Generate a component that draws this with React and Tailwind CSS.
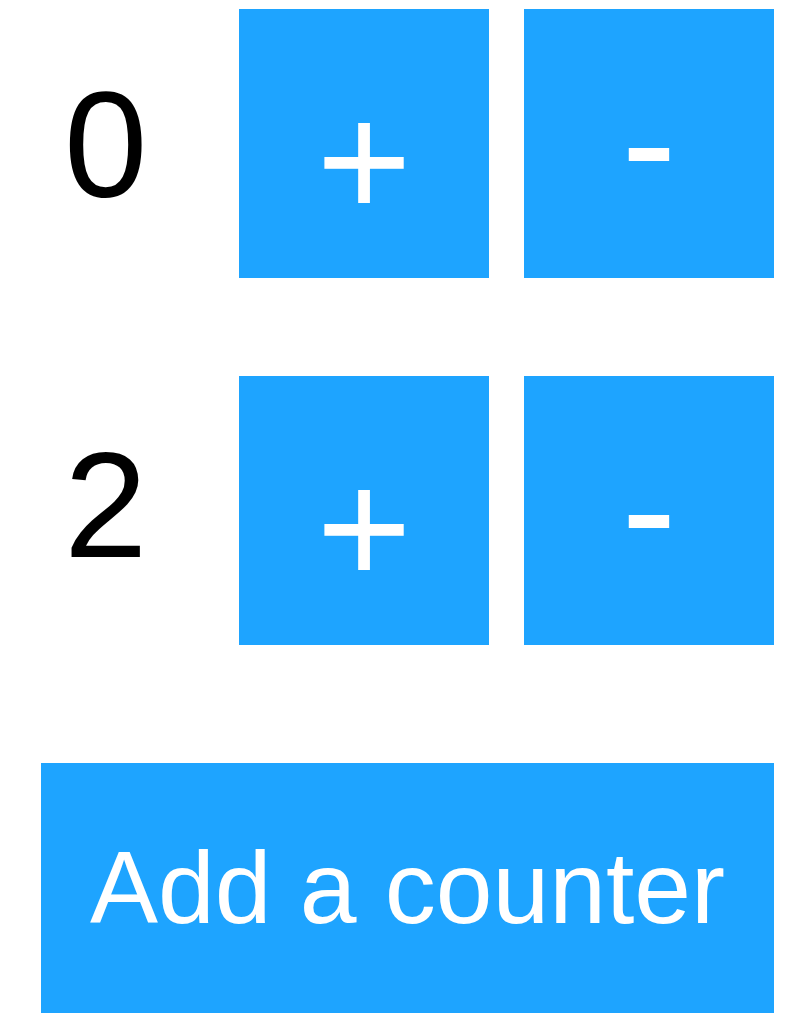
import React from "react";

function CounterRow({ value, numberPad, rowClass }) {
  return (
    <div className={"flex h-[269px] " + rowClass}>
      <div className={"flex-1 pl-[64px] " + numberPad}>
        <span className="block text-[150px] leading-none text-black">{value}</span>
      </div>
      <div className="flex gap-[35px]">
        <button className="w-[250px] h-[269px] bg-[#1ea4ff] flex justify-center items-start pt-[70px] text-white text-[163px] leading-none">
          <span className="block leading-none">+</span>
        </button>
        <button className="w-[250px] h-[269px] bg-[#1ea4ff] flex justify-center items-start pt-[50px] text-white text-[165px] leading-none">
          <span className="block leading-none">-</span>
        </button>
      </div>
    </div>
  );
}

export default function App() {
  return (
    <div className="w-[804px] h-[1026px] bg-white pt-[9px] pr-[30px] font-['Liberation_Sans',Arial,sans-serif] overflow-hidden">
      <CounterRow value="0" numberPad="pt-[61px]" rowClass="" />
      <CounterRow value="2" numberPad="pt-[54px]" rowClass="mt-[98px]" />
      <div className="mt-[118px] pl-[41px]">
        <button className="w-[733px] h-[250px] bg-[#1ea4ff] flex items-center justify-center text-white text-[102px] leading-none">
          Add a counter
        </button>
      </div>
    </div>
  );
}
